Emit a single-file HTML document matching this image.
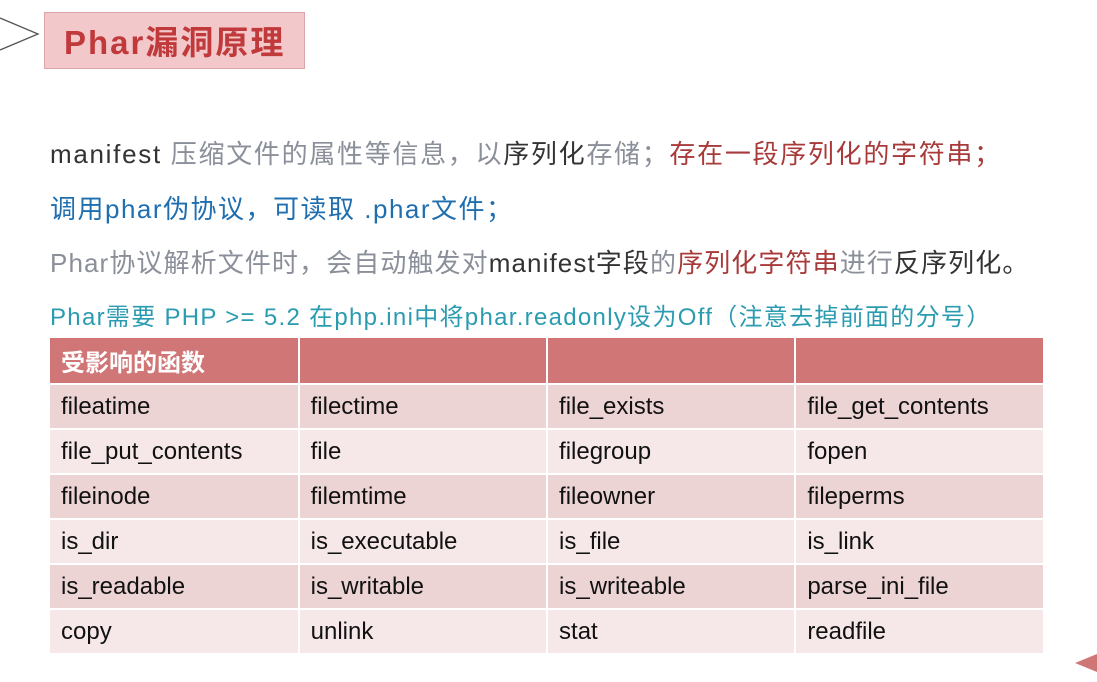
<!DOCTYPE html>
<html><head><meta charset="utf-8"><style>
body{margin:0;width:1097px;height:682px;background:#fff;overflow:hidden;position:relative;font-family:"Liberation Sans","Noto Sans CJK SC",sans-serif;}
.t{position:absolute;white-space:nowrap;}
.g{color:#8a8f99}.d{color:#333}.r{color:#a83a3a}.b{color:#1f6fb0}
table{position:absolute;left:50px;top:338px;border-collapse:collapse;width:995px;}
td{width:249px;padding:0 0 0 11px;font-size:24px;color:#111;border-right:2px solid #fff;border-bottom:2px solid #fff;box-sizing:border-box;height:45px;}
tr.h td{background:#d07676;height:46px;color:#fff;font-weight:bold;}
tr.o td{background:#ecd3d4}
tr.e td{background:#f6e8e8}
</style></head><body>
<svg class="t" style="left:0;top:14px" width="44" height="40"><polyline points="0,4 38,20 0,36" fill="none" stroke="#555" stroke-width="1.3"/></svg>
<div class="t" style="left:44px;top:12px;width:259px;height:55px;background:#f3c8cb;border:1px solid #dba5a9;"></div>
<div class="t" style="left:64px;top:16px;font-size:33px;letter-spacing:2px;font-weight:bold;color:#c0393b;">Phar漏洞原理</div>
<div class="t" style="left:50px;top:134px;font-size:26px;letter-spacing:1.7px;"><span class="d">manifest </span><span class="g">压缩文件的属性等信息，以</span><span class="d">序列化</span><span class="g">存储；</span><span class="r">存在一段序列化的字符串；</span></div>
<div class="t b" style="left:50px;top:189px;font-size:26px;letter-spacing:1.5px;">调用phar伪协议，可读取 .phar文件；</div>
<div class="t" style="left:50px;top:243px;font-size:26px;letter-spacing:1.1px;"><span class="g">Phar协议解析文件时，会自动触发对</span><span class="d">manifest字段</span><span class="g">的</span><span class="r">序列化字符串</span><span class="g">进行</span><span class="d">反序列化。</span></div>
<div class="t" style="left:50px;top:297px;font-size:24px;letter-spacing:1.3px;color:#2b9bb0;">Phar需要 PHP &gt;= 5.2 在php.ini中将phar.readonly设为Off（注意去掉前面的分号）</div>
<table>
<tr class="h"><td>受影响的函数</td><td></td><td></td><td></td></tr>
<tr class="o"><td>fileatime</td><td>filectime</td><td>file_exists</td><td>file_get_contents</td></tr>
<tr class="e"><td>file_put_contents</td><td>file</td><td>filegroup</td><td>fopen</td></tr>
<tr class="o"><td>fileinode</td><td>filemtime</td><td>fileowner</td><td>fileperms</td></tr>
<tr class="e"><td>is_dir</td><td>is_executable</td><td>is_file</td><td>is_link</td></tr>
<tr class="o"><td>is_readable</td><td>is_writable</td><td>is_writeable</td><td>parse_ini_file</td></tr>
<tr class="e"><td>copy</td><td>unlink</td><td>stat</td><td>readfile</td></tr>
</table>
<svg class="t" style="left:1075px;top:652px" width="22" height="22"><polygon points="0,11 22,2 22,20" fill="#d07676"/></svg>
</body></html>
